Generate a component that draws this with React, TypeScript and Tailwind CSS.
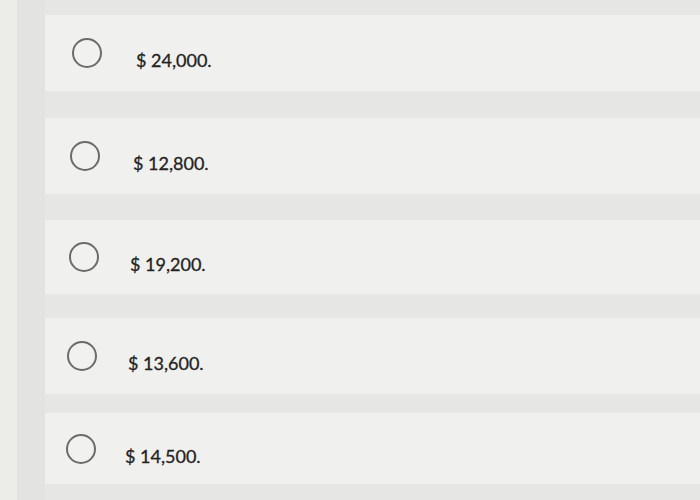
const options = [
  { label: '$ 24,000.', box: 'mt-[15px] h-[76px] pl-[27px] gap-[34px]' },
  { label: '$ 12,800.', box: 'mt-[27px] h-[76px] pl-[25px] gap-[33px]' },
  { label: '$ 19,200.', box: 'mt-[26px] h-[74px] pl-[24px] gap-[31px]' },
  { label: '$ 13,600.', box: 'mt-[24px] h-[76px] pl-[22px] gap-[31px]' },
  { label: '$ 14,500.', box: 'mt-[19px] h-[71px] pl-[21px] gap-[29px]' },
];

const Radio = () => (
  <span className="block w-[30px] h-[30px] rounded-full border-2 border-[#6b6b6b] bg-[#f1f1ef] shrink-0" />
);

export default function App() {
  return (
    <div className="w-[700px] h-[500px] overflow-hidden flex bg-[#e6e6e4] font-['Lato','Liberation_Sans',sans-serif]">
      {/* edge of the screen */}
      <div className="w-[17px] shrink-0 bg-[#ecece9]" />
      <div className="w-[28px] shrink-0 bg-[#e3e3e1]" />

      <div className="flex-1 flex flex-col">
        {options.map((o) => (
          <label key={o.label} className={`shrink-0 flex items-center bg-[#f0f0ee] ${o.box}`}>
            <Radio />
            <span className="text-[18px] leading-none text-[#232323] pt-[14px] [-webkit-text-stroke:0.3px_#232323]">
              {o.label}
            </span>
          </label>
        ))}
      </div>
    </div>
  );
}
